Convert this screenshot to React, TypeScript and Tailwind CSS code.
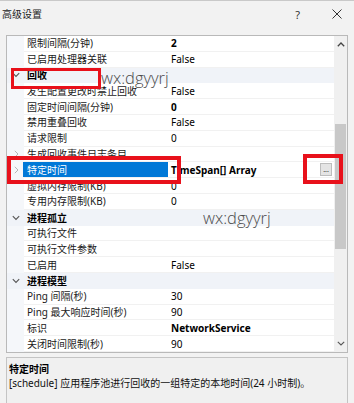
import React from "react";

type Row =
  | { kind: "cat"; name: string }
  | {
      kind: "prop";
      name: string;
      value?: string;
      bold?: boolean;
      collapsed?: boolean;
      selected?: boolean;
      button?: boolean;
    };

const rows: Row[] = [
  { kind: "prop", name: "限制间隔(分钟)", value: "2", bold: true },
  { kind: "prop", name: "已启用处理器关联", value: "False" },
  { kind: "cat", name: "回收" },
  { kind: "prop", name: "发生配置更改时禁止回收", value: "False" },
  { kind: "prop", name: "固定时间间隔(分钟)", value: "0", bold: true },
  { kind: "prop", name: "禁用重叠回收", value: "False" },
  { kind: "prop", name: "请求限制", value: "0" },
  { kind: "prop", name: "生成回收事件日志条目", collapsed: true },
  {
    kind: "prop",
    name: "特定时间",
    value: "TimeSpan[] Array",
    bold: true,
    collapsed: true,
    selected: true,
    button: true,
  },
  { kind: "prop", name: "虚拟内存限制(KB)", value: "0" },
  { kind: "prop", name: "专用内存限制(KB)", value: "0" },
  { kind: "cat", name: "进程孤立" },
  { kind: "prop", name: "可执行文件" },
  { kind: "prop", name: "可执行文件参数" },
  { kind: "prop", name: "已启用", value: "False" },
  { kind: "cat", name: "进程模型" },
  { kind: "prop", name: "Ping 间隔(秒)", value: "30" },
  { kind: "prop", name: "Ping 最大响应时间(秒)", value: "90" },
  { kind: "prop", name: "标识", value: "NetworkService", bold: true },
  { kind: "prop", name: "关闭时间限制(秒)", value: "90" },
];

const font = { fontFamily: '"Noto Sans", "Noto Sans CJK SC", sans-serif' };

function ChevronDown() {
  return (
    <svg width="8" height="6" viewBox="0 0 8 6" className="block">
      <path d="M0.8 1.2 L4 4.4 L7.2 1.2" fill="none" stroke="#555" strokeWidth="1.1" />
    </svg>
  );
}

function ChevronRight() {
  return (
    <svg width="5" height="8" viewBox="0 0 5 8" className="block">
      <path d="M0.8 0.8 L4 4 L0.8 7.2" fill="none" stroke="#b5b5b5" strokeWidth="1" />
    </svg>
  );
}

function GridRow({ row }: { row: Row }) {
  if (row.kind === "cat") {
    return (
      <div className="flex h-[15.8px] items-center bg-[#f0f3f8]">
        <div className="flex w-[17px] shrink-0 items-center justify-center pl-[1px]">
          <ChevronDown />
        </div>
        <div className="pl-[3px] text-[10px] font-bold leading-none text-black">{row.name}</div>
      </div>
    );
  }
  return (
    <div className="flex h-[15.8px] items-stretch">
      <div className="flex w-[17px] shrink-0 items-center justify-center bg-[#f5f7fa] pl-[2px]">
        {row.collapsed ? <ChevronRight /> : null}
      </div>
      <div className="flex flex-1 items-stretch border-b border-[#f1f1f1] bg-white">
        <div
          className={
            row.selected
              ? "-ml-[1px] flex w-[145px] shrink-0 items-center bg-[#0078d7] pl-[4px] text-[10px] leading-none text-white"
              : "flex w-[144px] shrink-0 items-center pl-[3px] text-[10px] leading-none text-[#1a1a1a]"
          }
        >
          {row.name}
        </div>
        <div
          className={
            "flex flex-1 items-center pl-[3px] text-[10px] leading-none text-black " +
            (row.bold ? "font-bold" : "")
          }
        >
          {row.value ?? ""}
        </div>
        {row.button ? (
          <div className="flex items-center pr-[2px]">
            <div className="flex h-[13px] w-[12px] items-end justify-center border border-[#bdbdbd] bg-[#e4e4e4] pb-[2px] text-[7px] leading-none text-[#333]">
              ...
            </div>
          </div>
        ) : null}
      </div>
    </div>
  );
}

export default function App() {
  return (
    <div
      className="relative flex h-[403px] w-[354px] flex-col overflow-hidden border-t border-[#c9c9c9] bg-[#f2f2f2]"
      style={font}
    >
      {/* title bar */}
      <div className="flex h-[26px] shrink-0 items-center justify-between pl-[2px] pr-[12px]">
        <span className="text-[10px] leading-none text-[#222]">高级设置</span>
        <div className="flex items-center gap-[32px]">
          <span className="text-[11px] leading-none text-[#333]">?</span>
          <svg width="10" height="10" viewBox="0 0 10 10" className="block">
            <path d="M0.5 0.5 L9.5 9.5 M9.5 0.5 L0.5 9.5" stroke="#333" strokeWidth="1" />
          </svg>
        </div>
      </div>

      {/* property grid */}
      <div className="mx-[6px] mt-[8px] flex h-[318px] shrink-0 border border-[#b9b9b9] bg-white">
        <div className="flex flex-1 flex-col overflow-hidden">
          {rows.map((r, i) => (
            <GridRow key={i} row={r} />
          ))}
        </div>
        <div className="flex w-[13px] shrink-0 flex-col items-center bg-[#f0f0f0]">
          <div className="flex h-[14px] w-full items-center justify-center pt-[2px]">
            <svg width="8" height="5" viewBox="0 0 8 5" className="block">
              <path d="M0.8 4.2 L4 1 L7.2 4.2" fill="none" stroke="#444" strokeWidth="1.3" />
            </svg>
          </div>
          <div className="mt-[74px] h-[125px] w-[11px] bg-[#c8c8c8]" />
          <div className="flex-1" />
          <div className="flex h-[14px] w-full items-center justify-center pb-[4px]">
            <svg width="8" height="5" viewBox="0 0 8 5" className="block">
              <path d="M0.8 0.8 L4 4 L7.2 0.8" fill="none" stroke="#555" strokeWidth="1.1" />
            </svg>
          </div>
        </div>
      </div>

      {/* description */}
      <div className="mx-[6px] mt-[4px] flex-1 border border-b-0 border-[#c4c4c4] bg-[#f0f0f0] px-[2px] pt-[4px]">
        <div className="text-[10px] font-bold leading-[14px] text-black">特定时间</div>
        <div className="text-[10px] leading-[14px] text-[#111]">
          [schedule] 应用程序池进行回收的一组特定的本地时间(24 小时制)。
        </div>
      </div>

      {/* annotation overlays */}
      <div className="pointer-events-none absolute left-[11px] top-[67px] h-[21px] w-[90px] border-[3px] border-[#e8111b]" />
      <div className="pointer-events-none absolute left-[7px] top-[155px] h-[28px] w-[174px] border-[4px] border-[#e8111b]" />
      <div className="pointer-events-none absolute left-[303px] top-[153px] h-[30px] w-[40px] border-[4px] border-[#e8111b]" />

      <div
        className="pointer-events-none absolute left-[101px] top-[69px] text-[16.5px] font-light leading-none text-[#4a4a4a]"
        style={{ fontFamily: '"Open Sans", sans-serif' }}
      >
        wx:dgyyrj
      </div>
      <div
        className="pointer-events-none absolute left-[203px] top-[209px] text-[16.5px] font-light leading-none text-[#4a4a4a]"
        style={{ fontFamily: '"Open Sans", sans-serif' }}
      >
        wx:dgyyrj
      </div>
    </div>
  );
}
